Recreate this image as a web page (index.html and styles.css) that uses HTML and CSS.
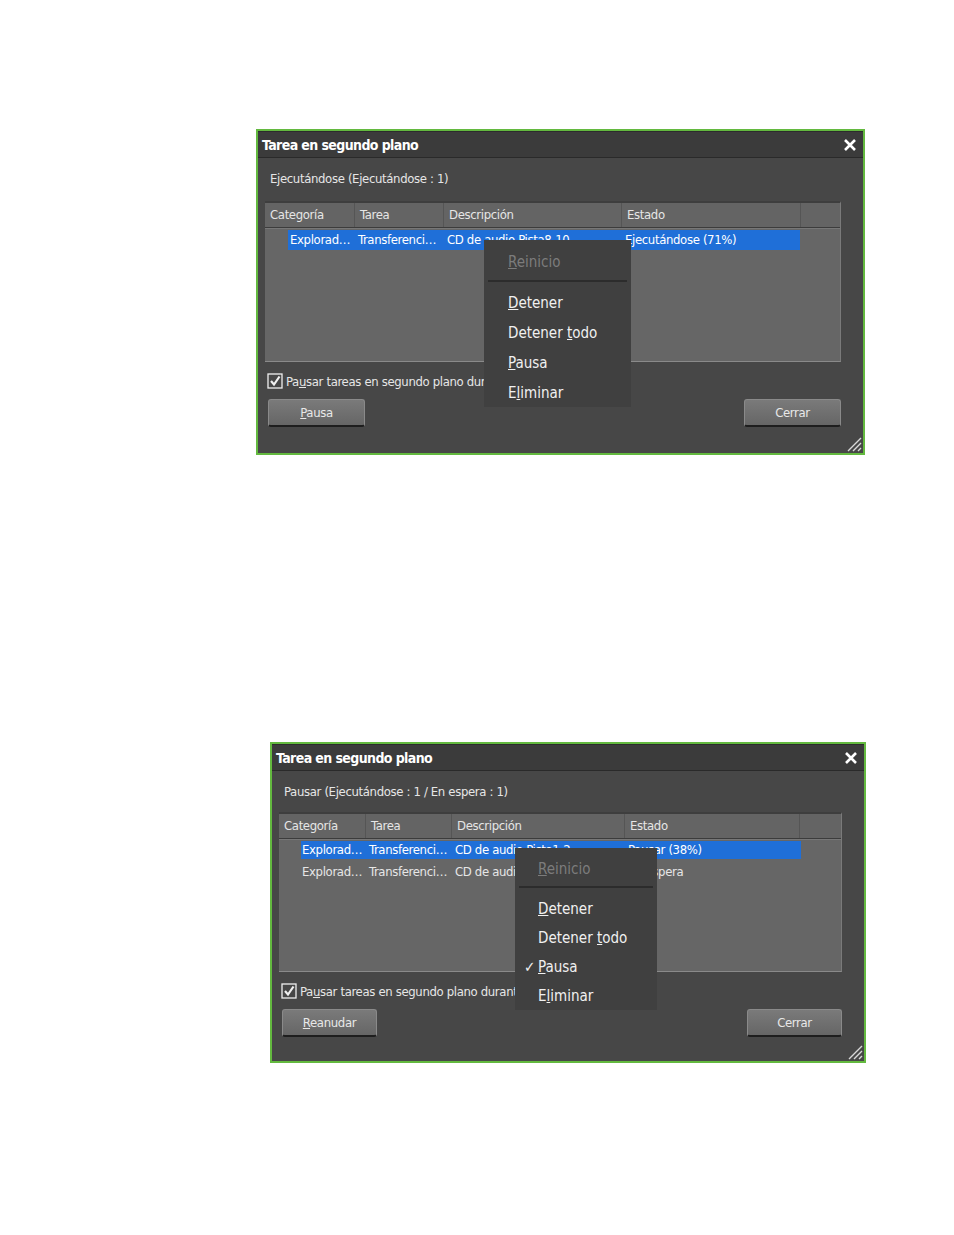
FILE: index.html
```html
<!DOCTYPE html>
<html lang="es">
  <head>
    <meta charset="UTF-8" />
    <meta name="viewport" content="width=device-width, initial-scale=1.0" />
    <title>Tarea en segundo plano</title>
    <link rel="stylesheet" href="styles.css">
  </head>
  <body>
    <div class="page">
      <!-- primer diálogo: ejecutándose -->
      <div class="dlg dlg-a">
        <div class="dlg-title">
          <span>Tarea en segundo plano</span>
          <svg class="close" viewBox="0 0 14 14"><path d="M2 2 L12 12 M12 2 L2 12" /></svg>
        </div>
        <div class="dlg-body">
          <p class="status">Ejecutándose (Ejecutándose : 1)</p>
          <div class="list">
            <div class="list-head">
              <div>Categoría</div><div>Tarea</div><div>Descripción</div><div>Estado</div><div></div>
            </div>
            <div class="row sel">
              <span>Explorad…</span><span>Transferenci…</span><span>CD de audio Pista8-10</span><span>Ejecutándose (71%)</span>
            </div>
          </div>
          <div class="chk">
            <svg class="box" viewBox="0 0 16 16"><rect x="1" y="1" width="14" height="14" /><path d="M4 8 L7 11.5 L12.5 3.5" /></svg>
            <span>Pa<u>u</u>sar tareas en segundo plano durante</span>
          </div>
          <div class="btns">
            <button class="btn"><u>P</u>ausa</button>
            <button class="btn">Cerrar</button>
          </div>
        </div>
        <svg class="grip" viewBox="0 0 18 18"><path d="M17 4 L4 17 M17 9 L9 17 M17 14 L14 17" /></svg>
        <div class="menu">
          <div class="item off"><u>R</u>einicio</div>
          <div class="sep"></div>
          <div class="item"><u>D</u>etener</div>
          <div class="item">Detener <u>t</u>odo</div>
          <div class="item"><u>P</u>ausa</div>
          <div class="item">E<u>l</u>iminar</div>
        </div>
      </div>

      <!-- segundo diálogo: en pausa -->
      <div class="dlg dlg-b">
        <div class="dlg-title">
          <span>Tarea en segundo plano</span>
          <svg class="close" viewBox="0 0 14 14"><path d="M2 2 L12 12 M12 2 L2 12" /></svg>
        </div>
        <div class="dlg-body">
          <p class="status">Pausar (Ejecutándose : 1 / En espera : 1)</p>
          <div class="list">
            <div class="list-head">
              <div>Categoría</div><div>Tarea</div><div>Descripción</div><div>Estado</div><div></div>
            </div>
            <div class="row sel">
              <span>Explorad…</span><span>Transferenci…</span><span>CD de audio Pista1-2</span><span>Pausar (38%)</span>
            </div>
            <div class="row">
              <span>Explorad…</span><span>Transferenci…</span><span>CD de audio Pista3-4</span><span>En espera</span>
            </div>
          </div>
          <div class="chk">
            <svg class="box" viewBox="0 0 16 16"><rect x="1" y="1" width="14" height="14" /><path d="M4 8 L7 11.5 L12.5 3.5" /></svg>
            <span>Pa<u>u</u>sar tareas en segundo plano durante</span>
          </div>
          <div class="btns">
            <button class="btn"><u>R</u>eanudar</button>
            <button class="btn">Cerrar</button>
          </div>
        </div>
        <svg class="grip" viewBox="0 0 18 18"><path d="M17 4 L4 17 M17 9 L9 17 M17 14 L14 17" /></svg>
        <div class="menu">
          <div class="item off"><u>R</u>einicio</div>
          <div class="sep"></div>
          <div class="item"><u>D</u>etener</div>
          <div class="item">Detener <u>t</u>odo</div>
          <div class="item checked"><u>P</u>ausa</div>
          <div class="item">E<u>l</u>iminar</div>
        </div>
      </div>
    </div>
  </body>
</html>
```

FILE: styles.css
```css
body {
  margin: 0;
  background: #ffffff;
  font-family: "DejaVu Sans Condensed", "DejaVu Sans", sans-serif;
}
.page {
  padding-top: 129px;
}
.dlg {
  position: relative;
  box-sizing: border-box;
  border: 2px solid #63b93f;
  background: #474747;
  color: #e6e6e6;
}
.dlg-a {
  width: 609px;
  height: 326px;
  margin-left: 256px;
}
.dlg-b {
  width: 596px;
  height: 321px;
  margin-left: 270px;
  margin-top: 287px;
}
.dlg-title {
  height: 25px;
  display: flex;
  align-items: center;
  justify-content: space-between;
  padding: 0 6px 0 4px;
  background: #3b3b3b;
  border-top: 1px solid #2c2c2c;
  border-bottom: 1px solid #2a2a2a;
  font-size: 14px;
  font-weight: bold;
  letter-spacing: -0.6px;
  color: #ffffff;
}
.close {
  width: 14px;
  height: 14px;
  fill: none;
  stroke: #ffffff;
  stroke-width: 2.6;
}
.dlg-body {
  padding: 0 22px 0 7px;
}
.status {
  margin: 0;
  height: 43px;
  line-height: 42px;
  padding-left: 5px;
  font-size: 13px;
  letter-spacing: -0.35px;
}
.dlg-b .status {
  height: 41px;
  line-height: 41px;
}
.list {
  box-sizing: border-box;
  height: 161px;
  background: #666666;
  border-top: 2px solid #3e3e3e;
  border-right: 1px solid #7a7a7a;
  border-bottom: 1px solid #8a8a8a;
  font-size: 13px;
  letter-spacing: -0.35px;
}
.dlg-b .list {
  height: 160px;
}
.list-head {
  display: grid;
  height: 24px;
  border-bottom: 1px solid #3c3c3c;
  box-shadow: 0 1px 0 #777777;
  background: #646464;
}
.list-head div {
  line-height: 24px;
  padding-left: 5px;
  border-right: 1px solid #555555;
}
.list-head div:last-child {
  border-right: none;
}
.dlg-a .list-head,
.dlg-a .row {
  grid-template-columns: 90px 89px 178px 179px 1fr;
}
.dlg-b .list-head,
.dlg-b .row {
  grid-template-columns: 87px 86px 173px 175px 1fr;
}
.row {
  display: grid;
  height: 20px;
  margin-top: 2px;
  line-height: 20px;
  white-space: nowrap;
}
.row span {
  padding-left: 3px;
  overflow: hidden;
}
.row span:first-child {
  padding-left: 25px;
}
.row.sel {
  background: linear-gradient(to right, transparent 23px, #1f6fd8 23px);
  color: #ffffff;
  margin-right: 40px;
}
.dlg-b .row span:first-child {
  padding-left: 23px;
}
.dlg-b .row.sel {
  background: linear-gradient(to right, transparent 22px, #1f6fd8 22px);
  height: 18px;
  line-height: 18px;
}
.dlg-b .row + .row {
  margin-top: 3px;
}
.chk {
  display: flex;
  align-items: center;
  gap: 3px;
  height: 18px;
  margin-top: 10px;
  padding-left: 2px;
  font-size: 13px;
  letter-spacing: -0.35px;
  white-space: nowrap;
}
.chk .box {
  width: 16px;
  height: 16px;
  fill: none;
  stroke: #f0f0f0;
}
.chk .box rect {
  stroke-width: 1.3;
}
.chk .box path {
  stroke-width: 2.2;
}
.btns {
  display: flex;
  justify-content: space-between;
  margin-top: 9px;
  padding-left: 3px;
}
.btn {
  width: 97px;
  height: 28px;
  border: 1px solid #8a8a8a;
  border-bottom: 2px solid #1e1e1e;
  border-radius: 3px;
  background: linear-gradient(#7a7a7a, #666666);
  color: #e8e8e8;
  font-family: inherit;
  font-size: 13px;
  letter-spacing: -0.35px;
  padding: 0;
}
.dlg-b .btn {
  width: 95px;
}
.grip {
  position: absolute;
  right: 1px;
  bottom: 1px;
  width: 18px;
  height: 18px;
  fill: none;
  stroke: #d8d8d8;
  stroke-width: 1.4;
}
.menu {
  position: absolute;
  box-sizing: border-box;
  padding-top: 7px;
  background: #404040;
  font-size: 15px;
  color: #f0f0f0;
}
.dlg-a .menu {
  left: 226px;
  top: 109px;
  width: 147px;
  height: 167px;
}
.dlg-b .menu {
  left: 243px;
  top: 104px;
  width: 142px;
  height: 162px;
}
.item {
  position: relative;
  height: 30px;
  line-height: 30px;
  padding-left: 24px;
}
.dlg-b .item {
  height: 29px;
  line-height: 29px;
  padding-left: 23px;
}
.dlg-b .item.off {
  height: 28px;
  line-height: 28px;
}
.dlg-b .sep {
  margin-bottom: 7px;
}
.item.off {
  color: #7c7c7c;
}
.sep {
  height: 2px;
  margin: 3px 4px 6px;
  background: #2c2c2c;
}
.item.checked::before {
  content: "✓";
  position: absolute;
  left: 9px;
  font-size: 15px;
  font-weight: bold;
}
```
